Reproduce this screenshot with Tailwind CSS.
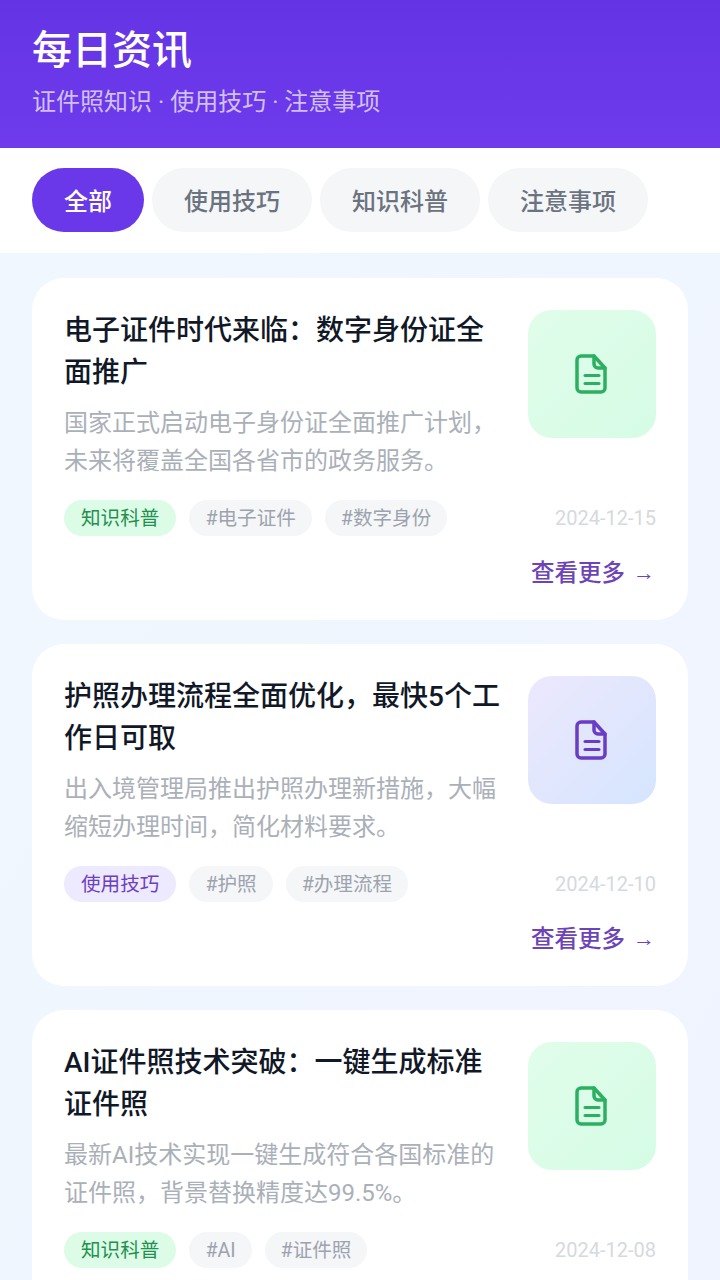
<!doctype html>
<html lang="zh">
<head>
    <meta charset="UTF-8">
    <title>每日资讯</title>
    <script src="https://cdn.jsdelivr.net/npm/@tailwindcss/browser@4"></script>
</head>
<body class="font-['Roboto','Noto_Sans_CJK_SC',sans-serif]">
<div class="w-[720px] h-[1280px] overflow-hidden bg-gradient-to-br from-[#f0f8fe] to-[#f0f4ff]">
    <header class="h-[148px] px-8 pt-[26px] bg-gradient-to-b from-[#6434e4] to-[#6f3bec]">
        <h1 class="text-[40px] leading-[50px] font-medium text-white">每日资讯</h1>
        <p class="mt-[11px] text-2xl leading-[30px] text-white/70">证件照知识 · 使用技巧 · 注意事项</p>
    </header>
    <nav class="h-[105px] bg-white px-8 pt-5 flex gap-2">
        <div class="w-[112px] h-16 pt-[3px] rounded-full bg-[#6a38e8] text-white text-2xl font-medium flex items-center justify-center">全部</div>
        <div class="w-40 h-16 pt-[3px] rounded-full bg-[#f4f6f7] text-[#6b7280] text-2xl font-medium flex items-center justify-center">使用技巧</div>
        <div class="w-40 h-16 pt-[3px] rounded-full bg-[#f4f6f7] text-[#6b7280] text-2xl font-medium flex items-center justify-center">知识科普</div>
        <div class="w-40 h-16 pt-[3px] rounded-full bg-[#f4f6f7] text-[#6b7280] text-2xl font-medium flex items-center justify-center">注意事项</div>
    </nav>
    <main class="px-8 pt-[25px] flex flex-col gap-6">
        <article class="h-[342px] shrink-0 rounded-[32px] bg-white px-8 pt-8">
            <div class="flex justify-between h-[190px]">
                <div class="w-[440px]">
                    <h2 class="text-[28px] leading-[42px] font-medium text-[#111827]">电子证件时代来临：数字身份证全面推广</h2>
                    <p class="mt-[10px] text-2xl leading-[38px] text-[#aab0b8]">国家正式启动电子身份证全面推广计划，未来将覆盖全国各省市的政务服务。</p>
                </div>
                <div class="w-32 h-32 rounded-3xl bg-gradient-to-br from-[#e0fdea] to-[#d6fce6] flex items-center justify-center">
                    <svg class="w-10 h-[46px] text-[#2bb062]" viewBox="0 0 40 46" fill="none" stroke="currentColor" stroke-width="3.5" stroke-linecap="round" stroke-linejoin="round"><path d="M9 5h13l11 12v20a4 4 0 0 1-4 4H9a4 4 0 0 1-4-4V9a4 4 0 0 1 4-4z"/><path d="M22 5v8a4 4 0 0 0 4 4h7"/><path d="M13 24.5h14" stroke-width="3"/><path d="M13 32.5h14" stroke-width="3"/></svg>
                </div>
            </div>
            <div class="flex items-center justify-between">
                <div class="flex gap-[13px]">
                    <span class="h-9 px-[17px] rounded-full bg-[#dcfce7] text-[#23904f] text-[19.6px] leading-[37px]">知识科普</span>
                    <span class="h-9 px-4 rounded-full bg-[#f5f6f7] text-[#9ca3af] text-[19.6px] leading-[37px]">#电子证件</span>
                    <span class="h-9 px-4 rounded-full bg-[#f5f6f7] text-[#9ca3af] text-[19.6px] leading-[37px]">#数字身份</span>
                </div>
                <span class="text-[20px] text-[#d6d9de]">2024-12-15</span>
            </div>
            <div class="mt-[19px] pr-[1px] flex justify-end items-center gap-2 text-[23.5px] font-medium leading-9 text-[#6d44b8]"><span>查看更多</span><span class="font-['Liberation_Sans'] font-bold text-[22px]">→</span></div>
        </article>
        <article class="h-[342px] shrink-0 rounded-[32px] bg-white px-8 pt-8">
            <div class="flex justify-between h-[190px]">
                <div class="w-[440px]">
                    <h2 class="text-[28px] leading-[42px] font-medium text-[#111827]">护照办理流程全面优化，最快5个工作日可取</h2>
                    <p class="mt-[10px] text-2xl leading-[38px] text-[#aab0b8]">出入境管理局推出护照办理新措施，大幅缩短办理时间，简化材料要求。</p>
                </div>
                <div class="w-32 h-32 rounded-3xl bg-gradient-to-br from-[#ece8fd] to-[#d5e5fe] flex items-center justify-center">
                    <svg class="w-10 h-[46px] text-[#6a3dc4]" viewBox="0 0 40 46" fill="none" stroke="currentColor" stroke-width="3.5" stroke-linecap="round" stroke-linejoin="round"><path d="M9 5h13l11 12v20a4 4 0 0 1-4 4H9a4 4 0 0 1-4-4V9a4 4 0 0 1 4-4z"/><path d="M22 5v8a4 4 0 0 0 4 4h7"/><path d="M13 24.5h14" stroke-width="3"/><path d="M13 32.5h14" stroke-width="3"/></svg>
                </div>
            </div>
            <div class="flex items-center justify-between">
                <div class="flex gap-[13px]">
                    <span class="h-9 px-[17px] rounded-full bg-[#ede9fe] text-[#6d3fc0] text-[19.6px] leading-[37px]">使用技巧</span>
                    <span class="h-9 px-4 rounded-full bg-[#f5f6f7] text-[#9ca3af] text-[19.6px] leading-[37px]">#护照</span>
                    <span class="h-9 px-4 rounded-full bg-[#f5f6f7] text-[#9ca3af] text-[19.6px] leading-[37px]">#办理流程</span>
                </div>
                <span class="text-[20px] text-[#d6d9de]">2024-12-10</span>
            </div>
            <div class="mt-[19px] pr-[1px] flex justify-end items-center gap-2 text-[23.5px] font-medium leading-9 text-[#6d44b8]"><span>查看更多</span><span class="font-['Liberation_Sans'] font-bold text-[22px]">→</span></div>
        </article>
        <article class="h-[342px] shrink-0 rounded-[32px] bg-white px-8 pt-8">
            <div class="flex justify-between h-[190px]">
                <div class="w-[440px]">
                    <h2 class="text-[28px] leading-[42px] font-medium text-[#111827]">AI证件照技术突破：一键生成标准证件照</h2>
                    <p class="mt-[10px] text-2xl leading-[38px] text-[#aab0b8]">最新AI技术实现一键生成符合各国标准的证件照，背景替换精度达99.5%。</p>
                </div>
                <div class="w-32 h-32 rounded-3xl bg-gradient-to-br from-[#e0fdea] to-[#d6fce6] flex items-center justify-center">
                    <svg class="w-10 h-[46px] text-[#2bb062]" viewBox="0 0 40 46" fill="none" stroke="currentColor" stroke-width="3.5" stroke-linecap="round" stroke-linejoin="round"><path d="M9 5h13l11 12v20a4 4 0 0 1-4 4H9a4 4 0 0 1-4-4V9a4 4 0 0 1 4-4z"/><path d="M22 5v8a4 4 0 0 0 4 4h7"/><path d="M13 24.5h14" stroke-width="3"/><path d="M13 32.5h14" stroke-width="3"/></svg>
                </div>
            </div>
            <div class="flex items-center justify-between">
                <div class="flex gap-[13px]">
                    <span class="h-9 px-[17px] rounded-full bg-[#dcfce7] text-[#23904f] text-[19.6px] leading-[37px]">知识科普</span>
                    <span class="h-9 px-4 rounded-full bg-[#f5f6f7] text-[#9ca3af] text-[19.6px] leading-[37px]">#AI</span>
                    <span class="h-9 px-4 rounded-full bg-[#f5f6f7] text-[#9ca3af] text-[19.6px] leading-[37px]">#证件照</span>
                </div>
                <span class="text-[20px] text-[#d6d9de]">2024-12-08</span>
            </div>
        </article>
    </main>
</div>
</body>
</html>
